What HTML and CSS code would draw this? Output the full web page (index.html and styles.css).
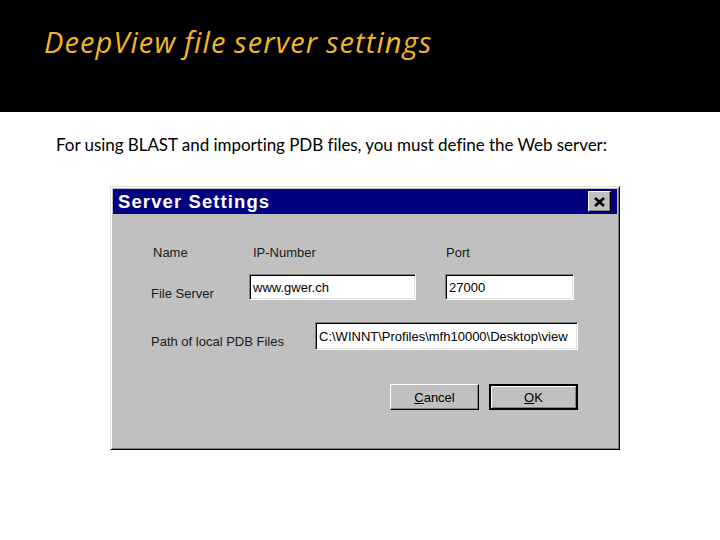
FILE: index.html
```html
<!DOCTYPE html>
<html>
<head>
<meta charset="utf-8">
<link rel="stylesheet" href="styles.css">
</head>
<body>
<header class="header">
  <h1 class="title">DeepView file server settings</h1>
</header>
<p class="intro">For using BLAST and importing PDB files, you must define the Web server:</p>
<div class="dialog">
  <div class="titlebar">
    <span class="titlebar-text">Server Settings</span>
    <span class="close-btn">
      <svg width="11" height="10" viewBox="0 0 11 10"><path d="M1 1 L10 9 M10 1 L1 9" stroke="#000" stroke-width="2.6" fill="none"/></svg>
    </span>
  </div>
  <div class="form">
    <div class="row heads">
      <span class="head-name">Name</span>
      <span class="head-ip">IP-Number</span>
      <span class="head-port">Port</span>
    </div>
    <div class="row row-server">
      <span class="label label-server">File Server</span>
      <span class="field field-ip">www.gwer.ch</span>
      <span class="field field-port">27000</span>
    </div>
    <div class="row row-path">
      <span class="label label-path">Path of local PDB Files</span>
      <span class="field field-path">C:\WINNT\Profiles\mfh10000\Desktop\view</span>
    </div>
    <div class="row row-buttons">
      <span class="btn"><u>C</u>ancel</span>
      <span class="btn btn-default"><u>O</u>K</span>
    </div>
  </div>
</div>
</body>
</html>
```
FILE: styles.css
```css
html, body {
  margin: 0;
  padding: 0;
  background: #fff;
}
body {
  width: 720px;
  height: 540px;
  overflow: hidden;
}
.header {
  height: 112px;
  background: #000;
  padding: 23px 0 0 44px;
  box-sizing: border-box;
}
.title {
  margin: 0;
  font-family: "Open Sans", Lato, sans-serif;
  font-style: italic;
  font-weight: 400;
  font-size: 29px;
  line-height: 38px;
  color: #f2b824;
  letter-spacing: 1.1px;
  word-spacing: -1px;
}
.intro {
  margin: 23px 0 0 56px;
  font-family: Lato, "Open Sans", sans-serif;
  font-size: 17px;
  line-height: 20px;
  color: #000;
  letter-spacing: -0.05px;
}
.dialog {
  margin: 31px 0 0 110px;
  width: 510px;
  height: 264px;
  box-sizing: border-box;
  background: #c0c0c0;
  border: 1px solid;
  border-color: #dfdfdf #000 #000 #dfdfdf;
  box-shadow: inset 1px 1px #fff, inset -1px -1px #808080;
  padding: 2px;
  font-family: "Liberation Sans", Arial, sans-serif;
  font-size: 13px;
  color: #1a1a1a;
}
.titlebar {
  height: 25px;
  background: #000080;
  display: flex;
  align-items: center;
  justify-content: space-between;
  padding: 0 6px 0 5px;
}
.titlebar-text {
  color: #fff;
  font-weight: bold;
  font-size: 18.5px;
  letter-spacing: 1.1px;
}
.close-btn {
  width: 23px;
  height: 21px;
  box-sizing: border-box;
  background: #c0c0c0;
  border: 1px solid;
  border-color: #fff #000 #000 #fff;
  box-shadow: inset -1px -1px #808080;
  display: flex;
  align-items: center;
  justify-content: center;
}
.form {
  padding-left: 38px;
}
.row {
  display: flex;
}
.heads {
  margin-top: 31px;
  line-height: 16px;
}
.head-name {
  width: 100px;
  padding-left: 2px;
}
.head-ip {
  width: 193px;
}
.row-server {
  margin-top: 13px;
}
.row-path {
  margin-top: 22px;
}
.row-buttons {
  margin-top: 34px;
  padding-left: 239px;
  gap: 10px;
}
.label {
  align-self: flex-end;
  line-height: 16px;
  margin-bottom: -2px;
}
.label-server {
  width: 98px;
}
.label-path {
  width: 164px;
  margin-bottom: 0;
}
.field {
  background: #fff;
  box-sizing: border-box;
  border: 1px solid;
  border-color: #808080 #fff #fff #808080;
  box-shadow: inset 1px 1px #000, inset -1px -1px #dfdfdf;
  padding: 0 3px;
  display: flex;
  align-items: center;
  color: #000;
  white-space: nowrap;
  overflow: hidden;
}
.field-ip {
  width: 167px;
  height: 26px;
}
.field-port {
  width: 129px;
  height: 26px;
  margin-left: 29px;
}
.field-path {
  width: 263px;
  height: 28px;
}
.btn {
  width: 89px;
  height: 26px;
  box-sizing: border-box;
  border: 1px solid;
  border-color: #fff #000 #000 #fff;
  box-shadow: inset -1px -1px #808080;
  display: flex;
  align-items: center;
  justify-content: center;
  color: #000;
}
.btn-default {
  border: 2px solid #000;
  box-shadow: inset 1px 1px #fff, inset -1px -1px #808080;
}
```
